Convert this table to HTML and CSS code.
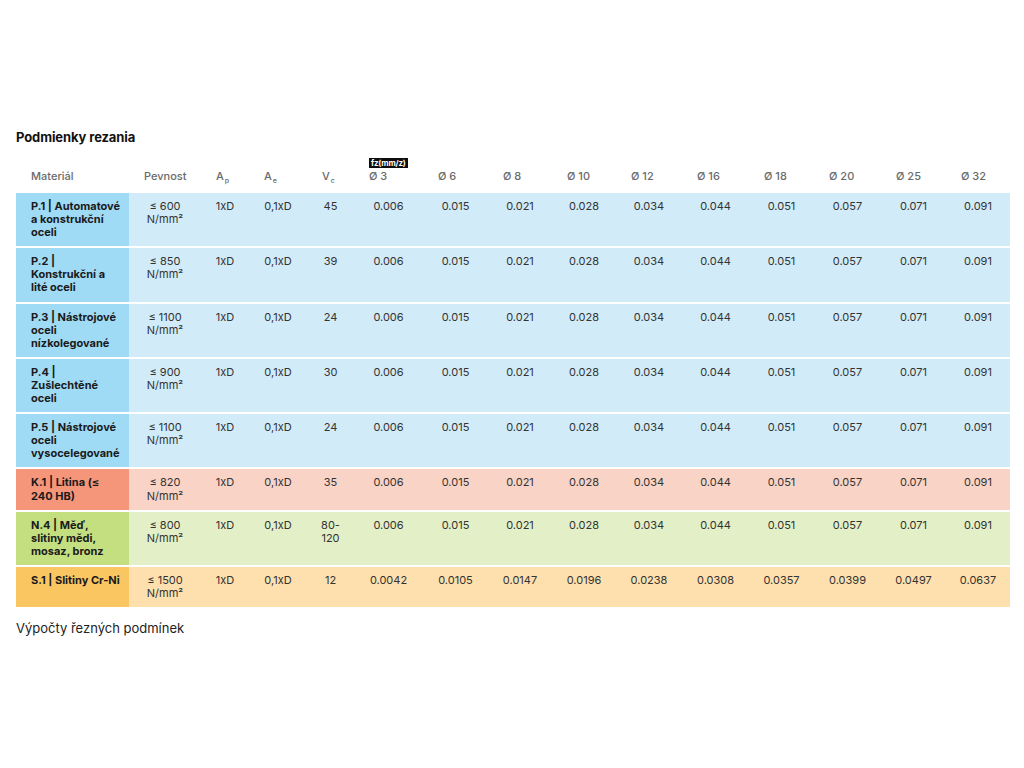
FILE: index.html
```html
<!DOCTYPE html>
<html lang="cs">
<head>
<meta charset="utf-8">
<title>Podmienky rezania</title>
<link rel="stylesheet" href="styles.css">
</head>
<body>
<main class="page">
  <h2 class="title">Podmienky rezania</h2>
  <table class="cut">
    <colgroup>
      <col style="width:113px"><col style="width:72px"><col style="width:48px"><col style="width:58px"><col style="width:47px">
      <col style="width:69px"><col style="width:65px"><col style="width:64px"><col style="width:64px"><col style="width:66px">
      <col style="width:67px"><col style="width:65px"><col style="width:67px"><col style="width:65px"><col style="width:64px">
    </colgroup>
    <thead>
      <tr>
        <th>Materiál</th>
        <th>Pevnost</th>
        <th>A<sub>p</sub></th>
        <th>A<sub>e</sub></th>
        <th>V<sub>c</sub></th>
        <th><span class="fz">fz(mm/z)</span>Ø 3</th>
        <th>Ø 6</th>
        <th>Ø 8</th>
        <th>Ø 10</th>
        <th>Ø 12</th>
        <th>Ø 16</th>
        <th>Ø 18</th>
        <th>Ø 20</th>
        <th>Ø 25</th>
        <th>Ø 32</th>
      </tr>
    </thead>
    <tbody>
      <tr class="p">
        <td class="mat">P.1 | Automatové<br>a konstrukční<br>oceli</td>
        <td>≤ 600<br>N/mm²</td><td>1xD</td><td>0,1xD</td><td>45</td>
        <td>0.006</td><td>0.015</td><td>0.021</td><td>0.028</td><td>0.034</td><td>0.044</td><td>0.051</td><td>0.057</td><td>0.071</td><td>0.091</td>
      </tr>
      <tr class="p">
        <td class="mat">P.2 |<br>Konstrukční a<br>lité oceli</td>
        <td>≤ 850<br>N/mm²</td><td>1xD</td><td>0,1xD</td><td>39</td>
        <td>0.006</td><td>0.015</td><td>0.021</td><td>0.028</td><td>0.034</td><td>0.044</td><td>0.051</td><td>0.057</td><td>0.071</td><td>0.091</td>
      </tr>
      <tr class="p">
        <td class="mat">P.3 | Nástrojové<br>oceli<br>nízkolegované</td>
        <td>≤ 1100<br>N/mm²</td><td>1xD</td><td>0,1xD</td><td>24</td>
        <td>0.006</td><td>0.015</td><td>0.021</td><td>0.028</td><td>0.034</td><td>0.044</td><td>0.051</td><td>0.057</td><td>0.071</td><td>0.091</td>
      </tr>
      <tr class="p">
        <td class="mat">P.4 |<br>Zušlechtěné<br>oceli</td>
        <td>≤ 900<br>N/mm²</td><td>1xD</td><td>0,1xD</td><td>30</td>
        <td>0.006</td><td>0.015</td><td>0.021</td><td>0.028</td><td>0.034</td><td>0.044</td><td>0.051</td><td>0.057</td><td>0.071</td><td>0.091</td>
      </tr>
      <tr class="p">
        <td class="mat">P.5 | Nástrojové<br>oceli<br>vysocelegované</td>
        <td>≤ 1100<br>N/mm²</td><td>1xD</td><td>0,1xD</td><td>24</td>
        <td>0.006</td><td>0.015</td><td>0.021</td><td>0.028</td><td>0.034</td><td>0.044</td><td>0.051</td><td>0.057</td><td>0.071</td><td>0.091</td>
      </tr>
      <tr class="k">
        <td class="mat">K.1 | Litina (≤<br>240 HB)</td>
        <td>≤ 820<br>N/mm²</td><td>1xD</td><td>0,1xD</td><td>35</td>
        <td>0.006</td><td>0.015</td><td>0.021</td><td>0.028</td><td>0.034</td><td>0.044</td><td>0.051</td><td>0.057</td><td>0.071</td><td>0.091</td>
      </tr>
      <tr class="n">
        <td class="mat">N.4 | Měď,<br>slitiny mědi,<br>mosaz, bronz</td>
        <td>≤ 800<br>N/mm²</td><td>1xD</td><td>0,1xD</td><td>80-<br>120</td>
        <td>0.006</td><td>0.015</td><td>0.021</td><td>0.028</td><td>0.034</td><td>0.044</td><td>0.051</td><td>0.057</td><td>0.071</td><td>0.091</td>
      </tr>
      <tr class="s">
        <td class="mat">S.1 | Slitiny Cr-Ni</td>
        <td>≤ 1500<br>N/mm²</td><td>1xD</td><td>0,1xD</td><td>12</td>
        <td>0.0042</td><td>0.0105</td><td>0.0147</td><td>0.0196</td><td>0.0238</td><td>0.0308</td><td>0.0357</td><td>0.0399</td><td>0.0497</td><td>0.0637</td>
      </tr>
    </tbody>
  </table>
  <p class="foot">Výpočty řezných podmínek</p>
</main>
</body>
</html>
```

FILE: styles.css
```css
html, body {
  margin: 0;
  padding: 0;
  background: #ffffff;
}
body {
  font-family: Inter, "Noto Sans", "Liberation Sans", sans-serif;
  color: #1b1b1b;
}
.page {
  padding: 129px 14px 0 16px;
}
.title {
  margin: 0;
  font-size: 13px;
  line-height: 16px;
  font-weight: 700;
  color: #111;
  letter-spacing: -0.1px;
}
.cut {
  width: 994px;
  table-layout: fixed;
  border-collapse: collapse;
  margin-top: 13px;
  font-size: 11px;
  line-height: 13px;
}
.cut th {
  text-align: left;
  vertical-align: bottom;
  font-weight: 500;
  color: #6a6a6a;
  padding: 0 0 10px 15px;
}
.cut th sub {
  font-size: 7px;
  line-height: 0;
  vertical-align: -3px;
  margin-left: 1px;
}
.fz {
  display: block;
  width: max-content;
  background: #0d0d0d;
  color: #fff;
  font-size: 8px;
  line-height: 10px;
  font-weight: 700;
  padding: 0 2px;
  margin-bottom: 2px;
  letter-spacing: -0.2px;
}
.cut td {
  text-align: center;
  vertical-align: top;
  padding: 7px 4px;
  line-height: 13.1px;
  color: #333;
}
.cut tbody tr + tr td {
  border-top: 2px solid #ffffff;
}
.cut td.mat {
  text-align: left;
  font-weight: 700;
  color: #1a1a1a;
  padding: 7px 6px 7px 15px;
}
.p td { background: #d2ebf8; }
.p td.mat { background: #a0dbf5; }
.k td { background: #f9d3c6; }
.k td.mat { background: #f5957a; }
.n td { background: #e3efc6; }
.n td.mat { background: #c4df7f; }
.s td { background: #fde0ae; }
.s td.mat { background: #f9c662; }
.foot {
  margin: 13px 0 0;
  font-size: 13px;
  line-height: 16px;
  color: #222;
}
```
